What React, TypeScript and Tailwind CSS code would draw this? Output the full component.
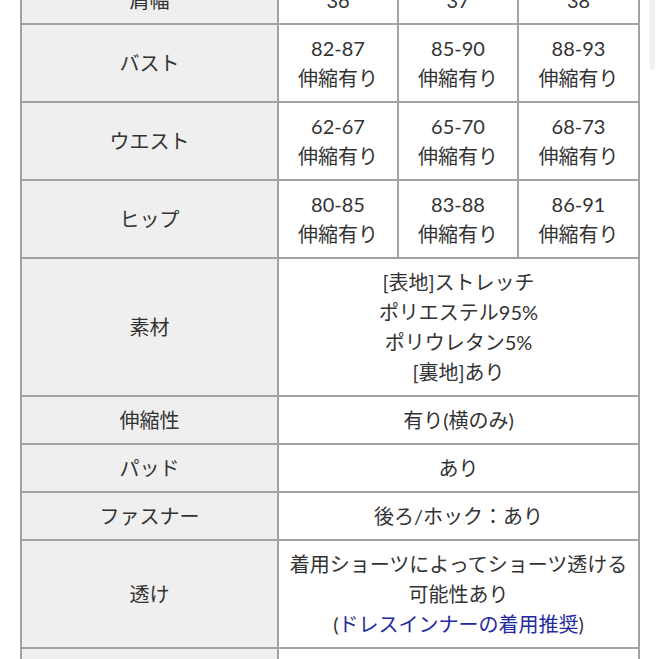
import React from 'react'

type Row = { label: string; cells: React.ReactNode[] }

const sizeRows: Row[] = [
  { label: '肩幅', cells: ['36', '37', '38'] },
  { label: 'バスト', cells: [['82-87', '伸縮有り'], ['85-90', '伸縮有り'], ['88-93', '伸縮有り']].map(lines) },
  { label: 'ウエスト', cells: [['62-67', '伸縮有り'], ['65-70', '伸縮有り'], ['68-73', '伸縮有り']].map(lines) },
  { label: 'ヒップ', cells: [['80-85', '伸縮有り'], ['83-88', '伸縮有り'], ['86-91', '伸縮有り']].map(lines) },
]

function lines(l: string[]) {
  return (
    <>
      {l.map((t) => (
        <div key={t}>{t}</div>
      ))}
    </>
  )
}

const detailRows: Row[] = [
  { label: '素材', cells: [lines(['[表地]ストレッチ', 'ポリエステル95%', 'ポリウレタン5%', '[裏地]あり'])] },
  { label: '伸縮性', cells: ['有り(横のみ)'] },
  { label: 'パッド', cells: ['あり'] },
  { label: 'ファスナー', cells: ['後ろ/ホック：あり'] },
  {
    label: '透け',
    cells: [
      <>
        <div>着用ショーツによってショーツ透ける</div>
        <div>可能性あり</div>
        <div>
          (<span className="text-[#1f2a9e]">ドレスインナーの着用推奨</span>)
        </div>
      </>,
    ],
  },
  { label: '生産国', cells: ['中国'] },
]

const th = 'border-2 border-[#a2a2a2] bg-[#efefef] px-2 py-2 text-center font-normal align-middle'
const td = 'border-2 border-[#a2a2a2] bg-white px-2 py-2 text-center align-middle'

export default function App() {
  return (
    <div
      className="relative h-[659px] overflow-hidden bg-white text-[20px] leading-[30px] text-[#333333]"
      style={{ fontFamily: '"Lato", "Noto Sans CJK JP", sans-serif' }}
    >
      <div className="-mt-[25px] pl-[20px]">
        <table className="w-[620px] table-fixed border-collapse">
          <colgroup>
            <col className="w-[257px]" />
            <col className="w-[120px]" />
            <col className="w-[120px]" />
            <col className="w-[121px]" />
          </colgroup>
          <tbody>
            {sizeRows.map((r) => (
              <tr key={r.label}>
                <th className={th}>{r.label}</th>
                {r.cells.map((c, i) => (
                  <td key={i} className={td}>
                    {c}
                  </td>
                ))}
              </tr>
            ))}
            {detailRows.map((r) => (
              <tr key={r.label}>
                <th className={th}>{r.label}</th>
                <td colSpan={3} className={td}>
                  {r.cells[0]}
                </td>
              </tr>
            ))}
          </tbody>
        </table>
      </div>
      {/* faint scrollbar thumb */}
      <div className="absolute right-[4px] top-0 h-[70px] w-[5px] rounded-b bg-[#f0f0f0]" />
    </div>
  )
}
